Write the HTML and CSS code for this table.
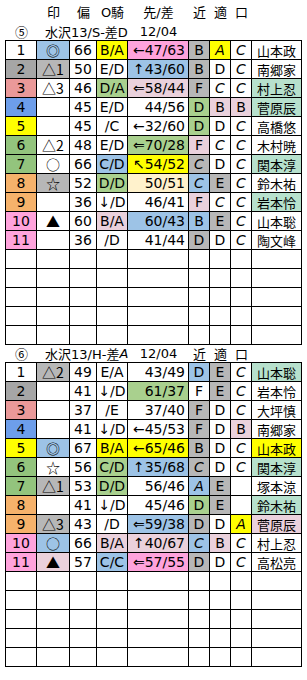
FILE: index.html
```html
<!DOCTYPE html>
<html lang="ja">
<head>
<meta charset="utf-8">
<link rel="stylesheet" href="styles.css">
</head>
<body>
<div class="sheet">
  <div class="cols head">
    <span></span><span>印</span><span>偏</span><span>O騎</span><span>先/差</span><span>近</span><span>適</span><span>口</span><span></span>
  </div>
  <div class="cols title title1">
    <span class="cj">⑤</span><span class="race">水沢13/S-差D</span><span>12/04</span>
  </div>
  <div class="cols tbl">
    <span class="w">1</span><span class="bl m">◎</span><span>66</span><span class="ye">B/A</span><span class="pk t">←47/63</span><span class="gr">B</span><span class="ye i">A</span><span class="i">C</span><span class="n">山本政</span>
    <span class="dg">2</span><span class="gr m">△1</span><span>50</span><span>E/D</span><span class="bl t">↑43/60</span><span class="gr">B</span><span>D</span><span class="i">C</span><span class="n">南郷家</span>
    <span class="sa">3</span><span class="m">△3</span><span>46</span><span class="gn">D/A</span><span class="pp t">⇐58/44</span><span class="gr">F</span><span class="i">C</span><span class="i">C</span><span class="n mt">村上忍</span>
    <span class="db">4</span><span></span><span>45</span><span>E/D</span><span class="t">44/56</span><span class="gn">D</span><span class="pp">B</span><span class="pp">B</span><span class="n mt">菅原辰</span>
    <span class="ye">5</span><span></span><span>45</span><span>/C</span><span class="t">←32/60</span><span class="gn">D</span><span>D</span><span class="i">C</span><span class="n">高橋悠</span>
    <span class="rg">6</span><span class="m">△2</span><span>48</span><span>E/D</span><span class="gn t">⇐70/28</span><span class="pp">F</span><span class="i">C</span><span class="i">C</span><span class="n">木村暁</span>
    <span class="rg">7</span><span class="m">○</span><span>66</span><span class="bl">C/D</span><span class="ye t">↖54/52</span><span class="gr i">C</span><span>D</span><span class="i">C</span><span class="n mt">関本淳</span>
    <span class="or">8</span><span class="gr m">☆</span><span>52</span><span class="gn">D/D</span><span class="cr t">50/51</span><span class="bl i">C</span><span class="gr">E</span><span class="i">C</span><span class="n">鈴木祐</span>
    <span class="or">9</span><span></span><span>36</span><span>↓/D</span><span class="t">46/41</span><span class="pp">F</span><span class="i">C</span><span class="i">C</span><span class="n mt">岩本怜</span>
    <span class="pk">10</span><span class="m">▲</span><span>60</span><span class="pp">B/A</span><span class="bl t">60/43</span><span class="bl">B</span><span class="gr">E</span><span class="i">C</span><span class="n">山本聡</span>
    <span class="pk">11</span><span></span><span>36</span><span>/D</span><span class="t">41/44</span><span class="gr">D</span><span>D</span><span class="i">C</span><span class="n">陶文峰</span>
    <span></span><span></span><span></span><span></span><span></span><span></span><span></span><span></span><span></span>
    <span></span><span></span><span></span><span></span><span></span><span></span><span></span><span></span><span></span>
    <span></span><span></span><span></span><span></span><span></span><span></span><span></span><span></span><span></span>
    <span></span><span></span><span></span><span></span><span></span><span></span><span></span><span></span><span></span>
    <span></span><span></span><span></span><span></span><span></span><span></span><span></span><span></span><span></span>
  </div>
  <div class="cols title title2">
    <span class="cj">⑥</span><span class="race">水沢13/H-差<i>A</i></span><span>12/04</span><span>近</span><span>適</span><span>口</span>
  </div>
  <div class="cols tbl">
    <span>1</span><span class="gr m">△2</span><span>49</span><span>E/A</span><span class="t">43/49</span><span class="bl">D</span><span class="gr">E</span><span class="i">C</span><span class="n mt">山本聡</span>
    <span class="dg">2</span><span></span><span>41</span><span>↓/D</span><span class="gn t">61/37</span><span>F</span><span class="gr">E</span><span class="i">C</span><span class="n">岩本怜</span>
    <span class="sa">3</span><span></span><span>37</span><span>/E</span><span class="t">37/40</span><span class="gr">F</span><span>D</span><span class="i">C</span><span class="n">大坪慎</span>
    <span class="db">4</span><span></span><span>41</span><span>↓/D</span><span class="t">←45/53</span><span class="gr">F</span><span>D</span><span class="pp">B</span><span class="n">南郷家</span>
    <span class="ye">5</span><span class="bl m">◎</span><span>67</span><span class="ye">B/A</span><span class="ye t">←65/46</span><span class="gr">B</span><span>D</span><span class="i">C</span><span class="n ye">山本政</span>
    <span class="rg">6</span><span class="m">☆</span><span>56</span><span class="gn">C/D</span><span class="bl t">↑35/68</span><span class="gr i">C</span><span>D</span><span class="i">C</span><span class="n mt">関本淳</span>
    <span class="rg">7</span><span class="gr m">△1</span><span>53</span><span class="gn">D/D</span><span class="t">56/46</span><span class="bl i">A</span><span class="gr">E</span><span></span><span class="n">塚本涼</span>
    <span class="or">8</span><span></span><span>41</span><span>↓/D</span><span class="t">45/46</span><span class="gn">D</span><span class="gr">E</span><span></span><span class="n mt">鈴木祐</span>
    <span class="or">9</span><span class="gr m">△3</span><span>43</span><span>/D</span><span class="bl t">⇐59/38</span><span class="gr">D</span><span>D</span><span class="ye i">A</span><span class="n pp">菅原辰</span>
    <span class="pk">10</span><span class="bl m">○</span><span>66</span><span class="pp">B/A</span><span class="pp t">↑40/67</span><span class="bl i">C</span><span class="pp">B</span><span class="i">C</span><span class="n">村上忍</span>
    <span class="pk">11</span><span class="pp m">▲</span><span>57</span><span class="bl">C/C</span><span class="pk t">⇐57/55</span><span class="gr">D</span><span>D</span><span class="i">C</span><span class="n">高松亮</span>
    <span></span><span></span><span></span><span></span><span></span><span></span><span></span><span></span><span></span>
    <span></span><span></span><span></span><span></span><span></span><span></span><span></span><span></span><span></span>
    <span></span><span></span><span></span><span></span><span></span><span></span><span></span><span></span><span></span>
    <span></span><span></span><span></span><span></span><span></span><span></span><span></span><span></span><span></span>
    <span></span><span></span><span></span><span></span><span></span><span></span><span></span><span></span><span></span>
  </div>
</div>
</body>
</html>
```

FILE: styles.css
```css
html, body {
  margin: 0;
  padding: 0;
  background: #ffffff;
}

body {
  font-family: "DejaVu Sans", "Noto Sans CJK JP", sans-serif;
  font-size: 14px;
  color: #000000;
}

.sheet {
  padding: 2px 0 0 5px;
  width: 297px;
}

.cols {
  display: grid;
  grid-template-columns: 31px 33px 27px 31px 61px 21px 21px 21px 50px;
}

.cols > span {
  display: flex;
  align-items: center;
  justify-content: center;
  white-space: nowrap;
  overflow: hidden;
}

.head {
  height: 19px;
  font-size: 13px;
  padding-left: 1px;
}

.title {
  height: 19px;
  font-size: 13px;
  padding-left: 1px;
  box-sizing: border-box;
}

.title1 {
  padding-top: 1px;
}

.title2 {
  height: 17px;
}

.title .race {
  grid-column: span 3;
  justify-content: flex-start;
  padding-left: 8px;
}

.cj {
  font-family: "Noto Sans CJK JP", sans-serif;
}

.tbl {
  border-left: 1px solid #000;
  border-top: 1px solid #000;
  grid-auto-rows: 19px;
}

.tbl > span {
  border-right: 1px solid #000;
  border-bottom: 1px solid #000;
  box-sizing: border-box;
}

.tbl > .m {
  font-family: "Noto Sans CJK JP", sans-serif;
  font-size: 14px;
}

.tbl > .t {
  justify-content: flex-end;
  padding-right: 3px;
}

.tbl > .n {
  font-family: "Noto Sans CJK JP", sans-serif;
  font-size: 13px;
}

.i {
  font-style: italic;
}

.bl { background: #9dc3e6; }
.db { background: #6d9eeb; }
.dg { background: #a6a6a6; }
.gr { background: #b7b7b7; }
.ye { background: #ffff00; }
.pk { background: #ffa3dc; }
.pp { background: #ead1dc; }
.sa { background: #ea9999; }
.gn { background: #a9d08e; }
.mt { background: #b7e1cd; }
.rg { background: #93c47d; }
.or { background: #f6b26b; }
.cr { background: #fff2cc; }
```
